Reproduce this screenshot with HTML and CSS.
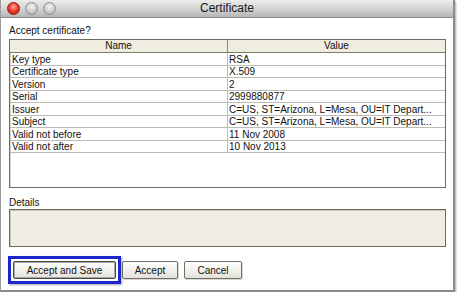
FILE: index.html
```html
<!DOCTYPE html>
<html>
<head>
<meta charset="utf-8">
<title>Certificate</title>
<link rel="stylesheet" href="styles.css">
</head>
<body>
<div class="window">
  <div class="titlebar">
    <div class="lights">
      <span class="light red"></span>
      <span class="light"></span>
      <span class="light"></span>
    </div>
    <div class="title">Certificate</div>
    <div></div>
  </div>
  <div class="content">
    <div class="prompt">Accept certificate?</div>
    <div class="table">
      <div class="thead">
        <div class="th first">Name</div>
        <div class="th">Value</div>
      </div>
      <div class="tr"><div class="td first">Key type</div><div class="td">RSA</div></div>
      <div class="tr"><div class="td first">Certificate type</div><div class="td">X.509</div></div>
      <div class="tr"><div class="td first">Version</div><div class="td">2</div></div>
      <div class="tr"><div class="td first">Serial</div><div class="td">2999880877</div></div>
      <div class="tr"><div class="td first">Issuer</div><div class="td">C=US, ST=Arizona, L=Mesa, OU=IT Depart...</div></div>
      <div class="tr"><div class="td first">Subject</div><div class="td">C=US, ST=Arizona, L=Mesa, OU=IT Depart...</div></div>
      <div class="tr"><div class="td first">Valid not before</div><div class="td">11 Nov 2008</div></div>
      <div class="tr"><div class="td first">Valid not after</div><div class="td">10 Nov 2013</div></div>
    </div>
    <div class="label">Details</div>
    <div class="details"></div>
    <div class="buttons">
      <span class="ring"><button class="btn focused save">Accept and Save</button></span>
      <button class="btn accept">Accept</button>
      <button class="btn cancel">Cancel</button>
    </div>
  </div>
</div>
</body>
</html>
```

FILE: styles.css
```css
html, body {
  margin: 0;
  padding: 0;
  background: #ffffff;
}
body {
  font-family: "Liberation Sans", Arial, sans-serif;
  font-size: 10px;
  color: #111111;
}
.window {
  width: 452px;
  height: 290px;
  background: #ffffff;
  border-left: 1px solid #9a9a9a;
  border-right: 2px solid #8c8c8c;
  border-bottom: 2px solid #8c8c8c;
  box-shadow: 1px 1px 0 #c4c4c4, 2px 2px 0 #e2e2e2;
}
.titlebar {
  height: 17px;
  border-bottom: 1px solid #8a8a8a;
  background: linear-gradient(#ececec, #d4d4d4 50%, #b6b6b6);
  display: grid;
  grid-template-columns: 1fr auto 1fr;
  align-items: center;
}
.lights {
  display: flex;
  gap: 5px;
  padding-left: 6px;
  align-items: center;
}
.light {
  width: 11px;
  height: 11px;
  border-radius: 50%;
  border: 0.5px solid #8e8e8e;
  background: radial-gradient(circle at 50% 35%, #f4f4f4, #c8c8c8 60%, #a8a8a8);
}
.light.red {
  border-color: #8e1a12;
  background: radial-gradient(circle at 50% 35%, #ffb0a0, #f04030 45%, #b8160c);
}
.title {
  font-size: 12px;
  line-height: 17px;
  color: #1a1a1a;
}
.content {
  padding: 7px 7px 0 8px;
}
.prompt {
  line-height: 12px;
  height: 12px;
  margin-bottom: 2px;
}
.table {
  height: 147px;
  border: 1px solid #6c6c5e;
  box-shadow: inset 1px 1px 0 #d8d8d0;
  background: #ffffff;
}
.thead {
  display: grid;
  grid-template-columns: 218px 1fr;
  height: 13px;
  box-sizing: border-box;
  border-bottom: 1px solid #7c7c6c;
  background: #efece0;
}
.th {
  text-align: center;
  line-height: 12px;
}
.th.first {
  border-right: 1px solid #8c8c7c;
}
.tr {
  display: grid;
  grid-template-columns: 218px 1fr;
  height: 12.5px;
  box-sizing: border-box;
  border-bottom: 1px solid #bcbcb4;
}
.td {
  line-height: 11.5px;
  padding: 0.5px 0 0 1px;
  white-space: nowrap;
  overflow: hidden;
}
.td.first {
  padding-left: 2px;
  border-right: 1px solid #bcbcb4;
}
.label {
  margin-top: 9px;
  line-height: 12px;
  height: 12px;
}
.details {
  height: 36px;
  border: 1px solid #6c6c5e;
  background: #f0eee2;
  box-shadow: inset 1px 1px 0 #c8c6ba;
}
.buttons {
  display: flex;
  gap: 6px;
  margin-top: 14px;
  padding-left: 4px;
}
.ring {
  display: flex;
  margin: -5px;
  padding: 2px;
  border: 3px solid #1c26cc;
  box-shadow: 1px 1px 2px rgba(0, 0, 60, 0.35);
}
.btn {
  height: 18px;
  padding: 0;
  font-family: "Liberation Sans", Arial, sans-serif;
  font-size: 10px;
  color: #111111;
  border: 1px solid #6e6e66;
  border-radius: 2px;
  background: linear-gradient(#ffffff, #f2f1ec 50%, #e2e1da);
  box-shadow: 1px 1px 0 #d8d8d0;
}
.save { width: 103px; }
.accept { width: 56px; }
.cancel { width: 58px; }
.btn.focused {
  border-color: #4a4a44;
  box-shadow: inset 0 0 0 1px #a8a89e;
}
```
